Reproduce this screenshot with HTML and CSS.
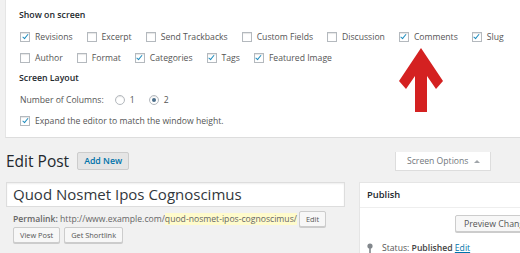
FILE: index.html
```html
<!DOCTYPE html>
<html>
<head>
<meta charset="utf-8">
<link rel="stylesheet" href="styles.css">
</head>
<body>
<div class="screen-meta">
  <h5>Show on screen</h5>
  <div class="row">
    <label class="opt"><span class="cb on"></span>Revisions</label>
    <label class="opt"><span class="cb"></span>Excerpt</label>
    <label class="opt"><span class="cb"></span>Send Trackbacks</label>
    <label class="opt"><span class="cb"></span>Custom Fields</label>
    <label class="opt"><span class="cb"></span>Discussion</label>
    <label class="opt"><span class="cb on"></span>Comments</label>
    <label class="opt"><span class="cb on"></span>Slug</label>
  </div>
  <div class="row">
    <label class="opt"><span class="cb"></span>Author</label>
    <label class="opt"><span class="cb"></span>Format</label>
    <label class="opt"><span class="cb on"></span>Categories</label>
    <label class="opt"><span class="cb on"></span>Tags</label>
    <label class="opt"><span class="cb on"></span>Featured Image</label>
  </div>
  <h5>Screen Layout</h5>
  <div class="row">
    <span class="cols-label">Number of Columns:</span>
    <label class="opt"><span class="rd"></span>1</label>
    <label class="opt"><span class="rd on"></span>2</label>
  </div>
  <div class="row">
    <label class="opt"><span class="cb on"></span>Expand the editor to match the window height.</label>
  </div>
</div>
<div class="wrap">
  <div class="tab">Screen Options <span class="tri"></span></div>
  <h1 class="page-title">Edit Post <span class="add-new">Add New</span></h1>
  <div class="columns">
    <div class="main">
      <div class="title-input">Quod Nosmet Ipos Cognoscimus</div>
      <div class="permalink">
        <b>Permalink:</b>&nbsp;http://www.example.com/<span class="hl">quod-nosmet-ipos-cognoscimus/</span>
        <span class="btn small">Edit</span>
      </div>
      <div class="btn-row">
        <span class="btn small">View Post</span>
        <span class="btn small">Get Shortlink</span>
      </div>
    </div>
    <div class="side">
      <div class="publish">
        <div class="ph">Publish</div>
        <div class="pb">
          <div class="prev-row"><span class="btn preview">Preview Changes</span></div>
          <div class="status">
            <svg class="pin" width="6" height="11" viewBox="0 0 6 11"><circle cx="3" cy="3" r="2.6" fill="#82878c"/><rect x="2.2" y="4" width="1.6" height="7" fill="#82878c"/></svg>
            <span>Status: <b>Published</b> <a class="lnk">Edit</a></span>
          </div>
        </div>
      </div>
    </div>
  </div>
</div>
<svg class="arrow" width="44" height="65" viewBox="0 0 44 65"><polygon points="22,0 44,33 37,41 28,28 28,64 16,64 16,28 7,41 0,33" fill="#d42121"/></svg>
</body>
</html>
```
FILE: styles.css
```css
html, body {
  margin: 0;
  padding: 0;
  width: 520px;
  height: 253px;
  overflow: hidden;
  background: #f1f1f1;
  font-family: "Open Sans", "Liberation Sans", sans-serif;
  font-size: 8.65px;
  color: #555;
}
.screen-meta {
  margin-left: 5px;
  background: #fff;
  border-left: 1px solid #e5e5e5;
  border-bottom: 1px solid #ddd;
  padding: 5px 0 6px 14px;
}
.screen-meta h5 {
  margin: 0;
  height: 21px;
  line-height: 21px;
  font-size: 8.75px;
  font-weight: 600;
  color: #23282d;
  margin-left: -1px;
}
.row {
  display: flex;
  align-items: center;
  height: 21px;
  white-space: nowrap;
}
.opt {
  display: flex;
  align-items: center;
  margin-right: 14px;
}
.cb, .rd {
  position: relative;
  width: 8px;
  height: 8px;
  border: 1px solid #b4b9be;
  background: #fff;
  box-shadow: inset 0 1px 1px rgba(0,0,0,0.1);
  margin-right: 5px;
  flex: none;
}
.rd { border-radius: 50%; }
.cb.on::after {
  content: "";
  position: absolute;
  left: 2.6px;
  top: 0.5px;
  width: 2.2px;
  height: 4.6px;
  border-right: 1.6px solid #1e8cbe;
  border-bottom: 1.6px solid #1e8cbe;
  transform: rotate(40deg);
}
.rd.on::after {
  content: "";
  position: absolute;
  left: 2px;
  top: 2px;
  width: 4px;
  height: 4px;
  border-radius: 50%;
  background: #4a6d8a;
}
.cols-label { margin-right: 11px; }
.row .opt:last-child { margin-right: 0; }
.wrap {
  padding: 0 0 0 6px;
}
.tab {
  float: right;
  margin-right: 29px;
  width: 83px;
  height: 18px;
  padding-left: 11px;
  background: #fff;
  border: 1px solid #ddd;
  border-top: none;
  line-height: 18px;
  color: #72777c;
  display: flex;
  align-items: center;
  gap: 6px;
}
.tri {
  width: 0;
  height: 0;
  border-left: 3px solid transparent;
  border-right: 3px solid transparent;
  border-bottom: 3.5px solid #a0a5aa;
}
.page-title {
  margin: 14px 0 12px 0;
  height: 18px;
  display: flex;
  align-items: center;
  font-size: 15.5px;
  font-weight: 400;
  color: #23282d;
  line-height: 18px;
}
.add-new {
  margin-left: 8px;
  height: 16px;
  line-height: 16px;
  padding: 0 6px;
  border: 1px solid #ccc;
  border-radius: 2px;
  background: #e5e5e5;
  color: #0073aa;
  font-size: 8.75px;
  font-weight: 600;
}
.columns {
  display: flex;
  gap: 14px;
  clear: both;
}
.main {
  width: 339px;
  flex: none;
}
.title-input {
  height: 23px;
  line-height: 23px;
  border: 1px solid #ddd;
  background: #fff;
  padding-left: 6px;
  font-size: 15px;
  color: #32373c;
  box-shadow: inset 0 1px 2px rgba(0,0,0,0.07);
}
.permalink {
  margin-top: 3px;
  height: 17px;
  display: flex;
  align-items: center;
  padding-left: 7px;
  color: #666;
  white-space: nowrap;
}
.permalink b { font-weight: 600; }
.hl { background: #fffbcc; }
.btn {
  display: inline-flex;
  align-items: center;
  box-sizing: border-box;
  border: 1px solid #ccc;
  border-radius: 2px;
  background: #f7f7f7;
  color: #555;
  box-shadow: 0 1px 0 #ccc;
  white-space: nowrap;
}
.btn.small {
  height: 16px;
  padding: 0 6px;
  font-size: 7.4px;
}
.permalink .btn { margin-left: 2px; }
.btn-row {
  display: flex;
  gap: 4px;
  padding-left: 7px;
}
.side {
  width: 188px;
  flex: none;
}
.publish {
  background: #fff;
  border: 1px solid #e5e5e5;
  height: 80px;
}
.ph {
  height: 24px;
  line-height: 24px;
  border-bottom: 1px solid #eee;
  padding-left: 7px;
  font-size: 9.4px;
  font-weight: 600;
  color: #23282d;
}
.prev-row {
  padding: 7px 0 0 95px;
}
.btn.preview {
  height: 17px;
  padding: 0 8px;
  font-size: 8.75px;
}
.status {
  display: flex;
  align-items: center;
  margin-top: 10px;
  padding-left: 7px;
  gap: 9px;
}
.status b { font-weight: 600; color: #444; }
.lnk { color: #0073aa; text-decoration: underline; }
.arrow {
  position: absolute;
  left: 399px;
  top: 48px;
}
```
